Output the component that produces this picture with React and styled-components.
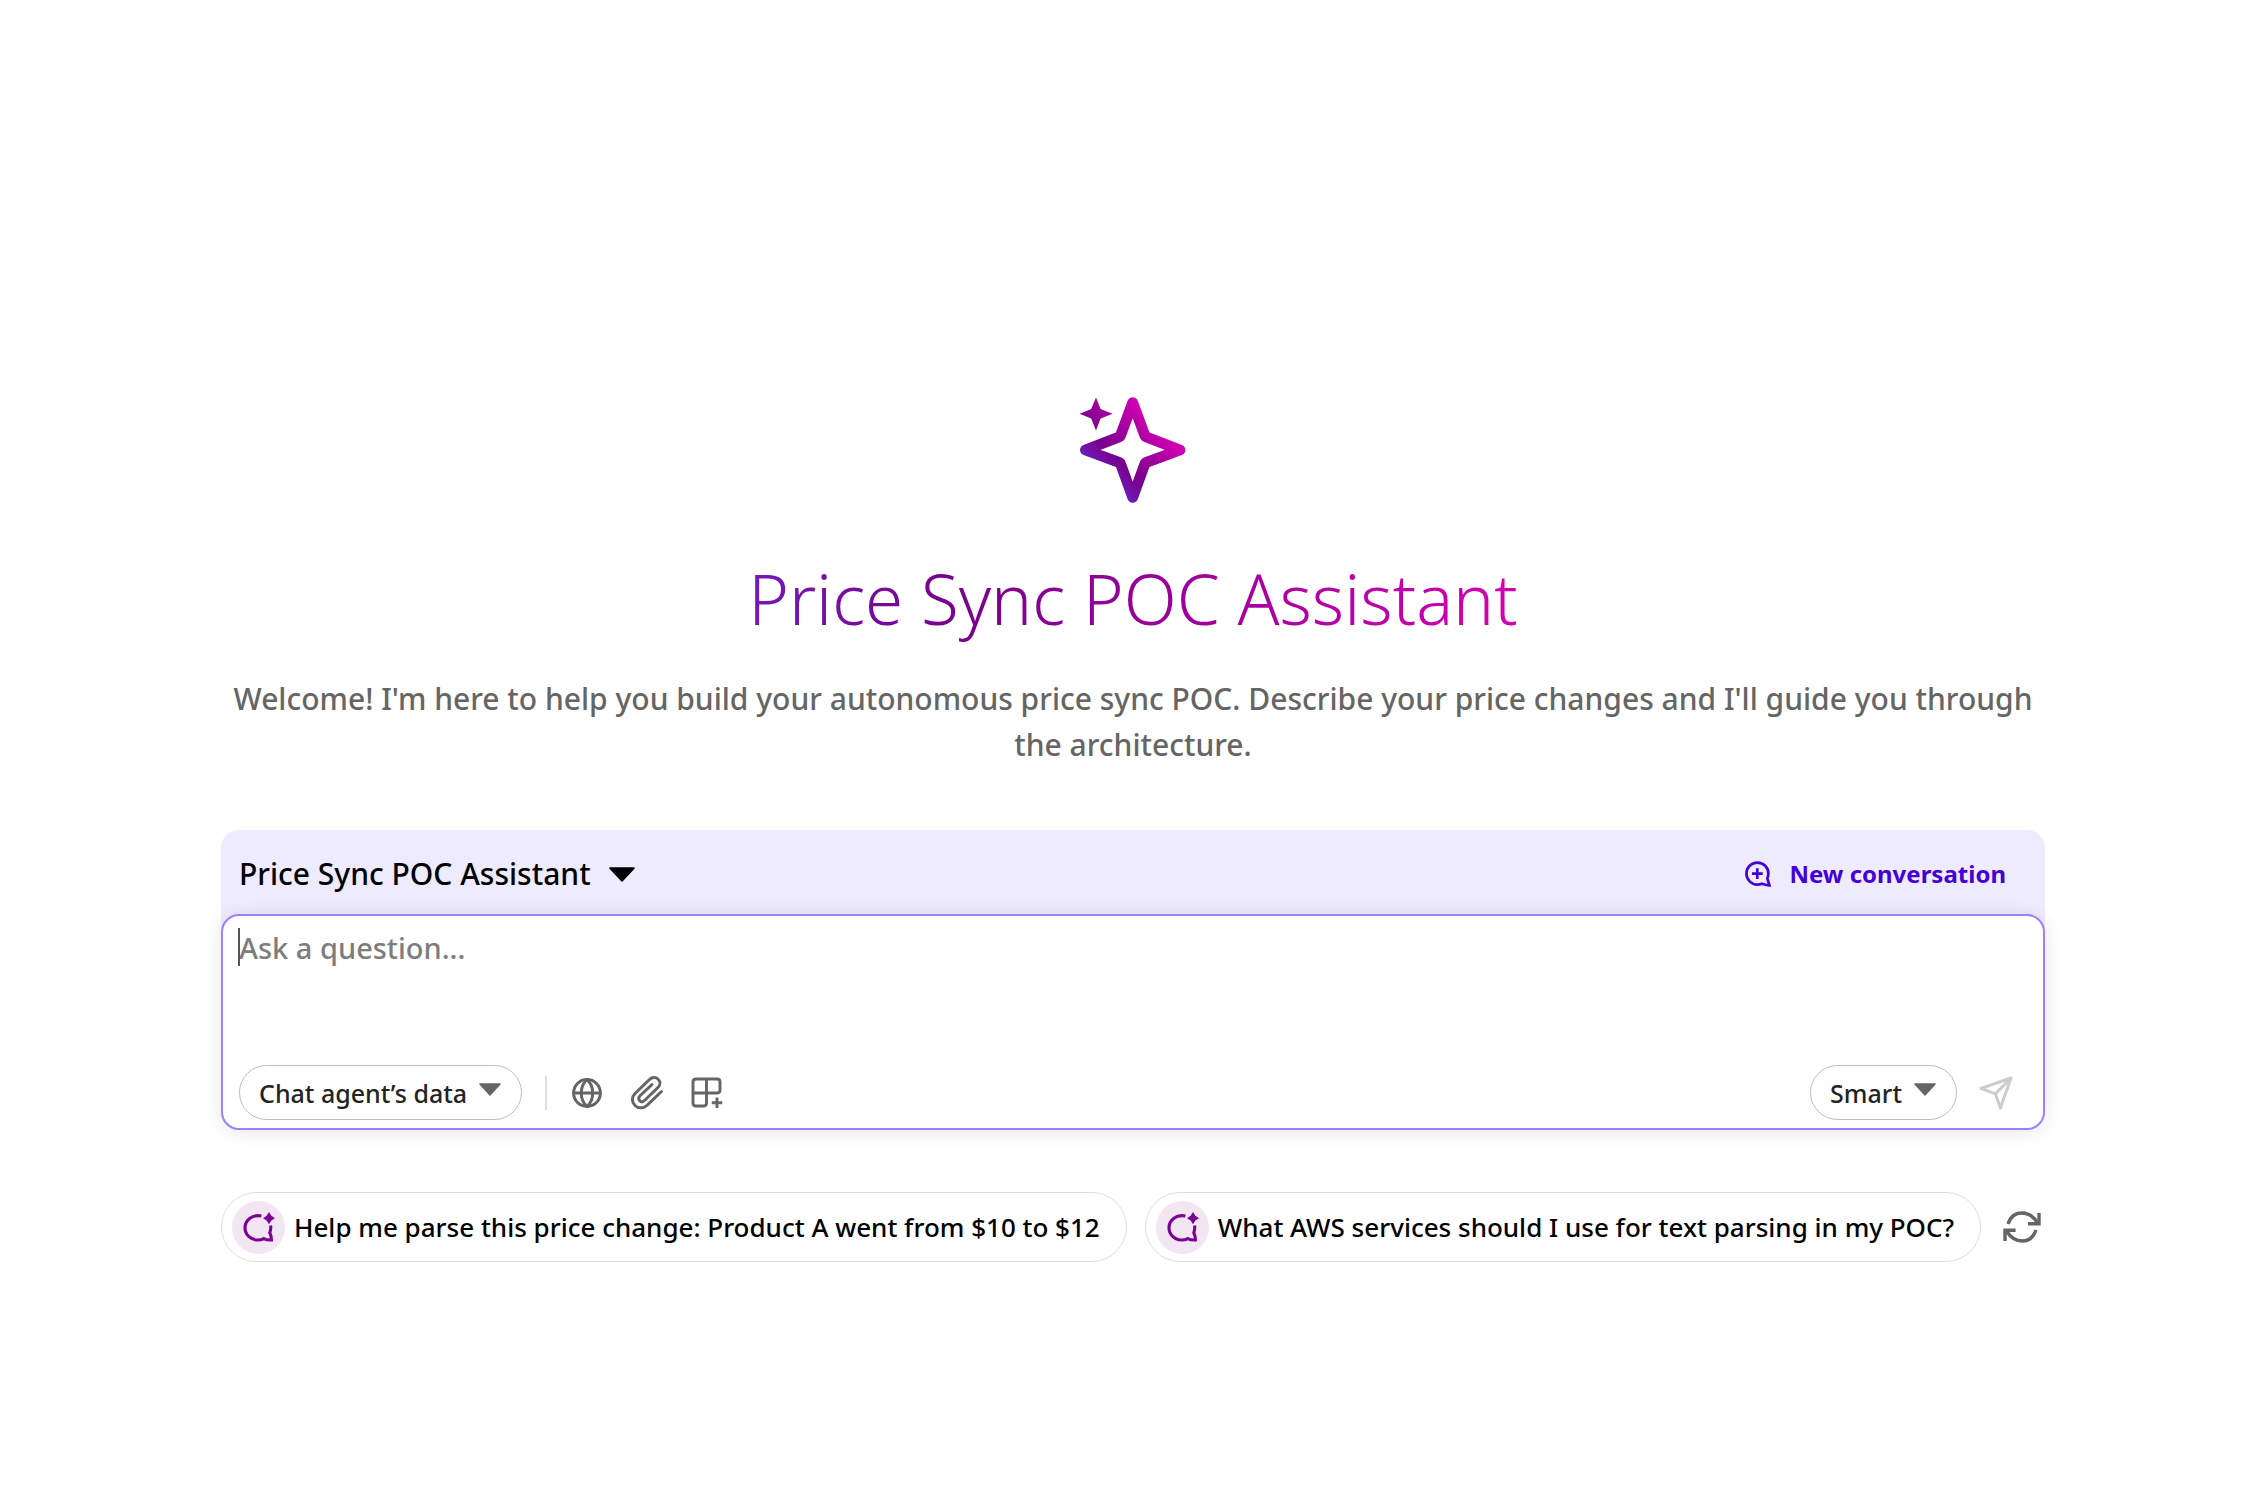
import React, { useState } from 'react';
import styled, { createGlobalStyle } from 'styled-components';

const prompts = [
  'Help me parse this price change: Product A went from $10 to $12',
  'What AWS services should I use for text parsing in my POC?',
];

const SparkleIcon = () => (
  <svg width="106" height="106" viewBox="0 0 106 106" overflow="visible" aria-hidden="true">
    <defs>
      <linearGradient id="spark" gradientUnits="userSpaceOnUse" x1="26" y1="80" x2="79" y2="27">
        <stop offset="0" stopColor="#6f1db8" />
        <stop offset="0.28" stopColor="#78008c" />
        <stop offset="1" stopColor="#d300b2" />
      </linearGradient>
    </defs>
    <path
      d="M52.7 5.6 L40.6 38.4 Q40.2 39.6 39 40 L5.4 53 L39 65.4 Q40.2 65.8 40.6 67 L52.7 100.4 L64.8 67 Q65.2 65.8 66.4 65.4 L100 53 L66.4 40 Q65.2 39.6 64.8 38.4 Z"
      fill="none"
      stroke="url(#spark)"
      strokeWidth="10.8"
      strokeLinejoin="round"
    />
    <path
      d="M16 0.6 L20.6 12 L32.6 16.8 L20.6 21.6 L16 33.4 L11.2 21.6 L-0.4 16.8 L11.2 12 Z"
      fill="url(#spark)"
    />
  </svg>
);

const Triangle = ({ width, height }) => (
  <svg width={width} height={height} viewBox="0 0 24 13" preserveAspectRatio="none" aria-hidden="true">
    <path d="M1 1 H23 L12 12 Z" fill="currentColor" stroke="currentColor" strokeWidth="1.6" strokeLinejoin="round" />
  </svg>
);

const NewChatIcon = () => (
  <svg width="26" height="26" viewBox="0 0 26 26" fill="none" stroke="currentColor" strokeWidth="2.7" aria-hidden="true">
    <path d="M23.4 12.6 A11 11 0 1 0 12.4 23.6 C14.3 23.6 15.6 23.2 17 22.7 C19.2 23.5 21.8 24 24.4 24.3 L22.3 17.4 C23 16 23.4 14.4 23.4 12.6 Z" />
    <path d="M12.3 7.2 V18 M6.9 12.6 H17.7" />
  </svg>
);

const GlobeIcon = () => (
  <svg width="32" height="32" viewBox="0 0 32 32" fill="none" stroke="currentColor" strokeWidth="3" aria-hidden="true">
    <circle cx="16" cy="16" r="13.4" />
    <path d="M2.6 16 H29.4" />
    <path d="M16 2.6 C8.4 9 8.4 23 16 29.4 C23.6 23 23.6 9 16 2.6 Z" strokeLinejoin="round" />
  </svg>
);

const ClipIcon = () => (
  <svg width="34" height="35" viewBox="0 0 34 35" fill="none" stroke="currentColor" strokeWidth="3" strokeLinecap="round" aria-hidden="true">
    <path d="M31.5 16.5 L17 30.3 C13 33.8 8 33.5 5 30.5 C1.5 27 1.5 22 5 18.5 L19.5 4.5 C22 2 26 2 28.2 4.2 C30.5 6.5 30.5 10 28.2 12.3 L14.5 25.5 C13 27 11 27 9.7 25.7 C8.3 24.3 8.5 22.3 9.8 21 L22 9.5" />
  </svg>
);

const AppsIcon = () => (
  <svg width="32" height="32" viewBox="0 0 32 32" fill="none" stroke="currentColor" strokeWidth="2.9" aria-hidden="true">
    <path d="M5 2 H26 Q29 2 29 5 V13 Q29 16 26 16 H2 M15.5 2 V26 Q15.5 29 12.5 29 H5 Q2 29 2 26 V5 Q2 2 5 2" />
    <path d="M26 20.5 V31 M20.8 25.8 H31.2" />
  </svg>
);

const SendIcon = () => (
  <svg width="34" height="34" viewBox="0 0 34 34" fill="none" stroke="currentColor" strokeWidth="3" strokeLinejoin="round" aria-hidden="true">
    <path d="M32 2 L2 12.4 L16.4 17.8 L21.4 32 Z M32 2 L16.4 17.8" />
  </svg>
);

const PromptIcon = () => (
  <svg width="31" height="31" viewBox="0 0 31 31" fill="none" stroke="currentColor" strokeWidth="3.1" overflow="visible" aria-hidden="true">
    <path d="M18.4 4 C9.6 2 2 8 2 15.8 C2 22.6 7.6 28 14.4 28 C17 28 19 27.6 20.8 26.6 C23.2 27.8 26 28.2 28.4 28 C28.4 25.6 28 23.2 26.8 20.8 C27.6 18.6 28 16 27.6 13.4" />
    <path d="M26 0 L28.4 3.8 L32 6.2 L28.4 8.6 L26 12.2 L23.6 8.6 L20 6.2 L23.6 3.8 Z" fill="currentColor" stroke="none" />
  </svg>
);

const RefreshIcon = () => (
  <svg width="38" height="32" viewBox="0 0 38 32" fill="none" stroke="currentColor" strokeWidth="3.4" aria-hidden="true">
    <path d="M5 13 C7.4 5.8 12.6 2 18.8 2 C25.4 2 30.8 5.8 34.4 12" />
    <path d="M36 2 V12.8 H25" />
    <path d="M33 19 C30.6 26.2 25.4 30 19.2 30 C12.4 30 7.4 26.2 3.4 20" />
    <path d="M2 30 V19.2 H12.6" />
  </svg>
);

const App = () => {
  const [question, setQuestion] = useState('');

  const questionChangeHandler = e => {
    setQuestion(e.target.value);
  };

  const submitHandler = e => {
    e.preventDefault();
    setQuestion('');
  };

  return (
    <Page>
      <GlobalStyle />
      <Hero>
        <SparkleIcon />
        <Title>Price Sync POC Assistant</Title>
        <Welcome>
          Welcome! I'm here to help you build your autonomous price sync POC. Describe your price
          changes and I'll guide you through the architecture.
        </Welcome>
      </Hero>

      <Composer onSubmit={submitHandler}>
        <ComposerHeader>
          <AgentPicker>
            <Select aria-label="Chat agent">
              <option>Price Sync POC Assistant</option>
            </Select>
            <Triangle width={26} height={15} />
          </AgentPicker>
          <NewConversation type="button">
            <NewChatIcon />
            New conversation
          </NewConversation>
        </ComposerHeader>
        <InputPanel>
          <QuestionField>
            {!question && <Caret />}
            <Question
              aria-label="Question"
              placeholder="Ask a question..."
              value={question}
              onChange={questionChangeHandler}
            />
          </QuestionField>
          <Toolbar>
            <PillPicker>
              <Select aria-label="Data source">
                <option>Chat agent’s data</option>
              </Select>
              <Triangle width={22} height={13} />
            </PillPicker>
            <Divider />
            <Tools>
              <IconButton type="button" aria-label="Web search">
                <GlobeIcon />
              </IconButton>
              <IconButton type="button" aria-label="Attach a file">
                <ClipIcon />
              </IconButton>
              <IconButton type="button" aria-label="Add apps">
                <AppsIcon />
              </IconButton>
            </Tools>
            <SendGroup>
              <PillPicker>
                <Select aria-label="Mode">
                  <option>Smart</option>
                </Select>
                <Triangle width={22} height={13} />
              </PillPicker>
              <IconButton type="submit" aria-label="Send" $muted>
                <SendIcon />
              </IconButton>
            </SendGroup>
          </Toolbar>
        </InputPanel>
      </Composer>

      <Suggestions>
        {prompts.map(prompt => (
          <Suggestion key={prompt} type="button" onClick={() => setQuestion(prompt)}>
            <Badge>
              <PromptIcon />
            </Badge>
            {prompt}
          </Suggestion>
        ))}
        <IconButton type="button" aria-label="Refresh suggestions">
          <RefreshIcon />
        </IconButton>
      </Suggestions>
    </Page>
  );
};

const GlobalStyle = createGlobalStyle`
  * {
    box-sizing: border-box;
  }

  body {
    margin: 0;
    background: #fff;
    color: #000;
    font-family: 'Noto Sans', 'Open Sans', sans-serif;
  }

  button,
  select,
  textarea {
    font: inherit;
    color: inherit;
  }
`;

const Page = styled.main`
  max-width: 1872px;
  margin: 0 auto;
  padding: 397px 24px 48px;
`;

const Hero = styled.section`
  display: flex;
  flex-direction: column;
  align-items: center;
  text-align: center;
`;

const Title = styled.h1`
  margin: 48px 0 0;
  font-size: 69px;
  font-weight: 300;
  line-height: 94px;
  color: transparent;
  background: linear-gradient(90deg, #7519b8, #78008c 27%, #d300b2);
  background-clip: text;
`;

const Welcome = styled.p`
  margin: 31px 0 0;
  font-size: 30px;
  font-weight: 500;
  line-height: 46px;
  color: #656565;
`;

const Composer = styled.form`
  margin-top: 62px;
`;

const ComposerHeader = styled.div`
  display: flex;
  align-items: center;
  justify-content: space-between;
  padding: 24px 39px 38px 18px;
  border-radius: 18px 18px 0 0;
  background: #efebff;
`;

const AgentPicker = styled.div`
  display: flex;
  align-items: center;
  gap: 18px;
  font-size: 30px;
  font-weight: 500;
  line-height: 40px;
`;

const Select = styled.select`
  appearance: none;
  field-sizing: content;
  padding: 0;
  border: 0;
  outline: 0;
  background: transparent;
  cursor: pointer;
`;

const NewConversation = styled.button`
  display: flex;
  align-items: center;
  gap: 18px;
  padding: 0;
  border: 0;
  background: transparent;
  color: #4400d4;
  font-size: 24px;
  font-weight: 700;
  line-height: 32px;
  cursor: pointer;
`;

const InputPanel = styled.div`
  position: relative;
  margin-top: -18px;
  padding: 12px 30px 8px 16px;
  border: 2px solid #9b80ff;
  border-radius: 18px;
  background: #fff;
  box-shadow: 0 2px 18px rgba(0, 0, 0, 0.1);
`;

const QuestionField = styled.div`
  position: relative;
`;

const Question = styled.textarea`
  display: block;
  width: 100%;
  height: 137px;
  padding: 0;
  border: 0;
  outline: 0;
  resize: none;
  background: transparent;
  font-size: 29px;
  font-weight: 500;
  line-height: 40px;

  &::placeholder {
    color: #7d7d7d;
    opacity: 1;
  }
`;

const Caret = styled.span`
  position: absolute;
  top: 0;
  left: -1px;
  width: 2px;
  height: 38px;
  background: #555;
`;

const Toolbar = styled.div`
  display: flex;
  align-items: center;
`;

const PillPicker = styled.div`
  display: flex;
  align-items: center;
  gap: 12px;
  height: 55px;
  padding: 0 20px 0 19px;
  border: 1px solid #bdbdbd;
  border-radius: 28px;
  color: #232323;
  font-size: 25px;
  font-weight: 500;
  line-height: 36px;

  svg {
    color: #656565;
    margin-bottom: 7px;
  }
`;

const Divider = styled.span`
  width: 2px;
  height: 34px;
  margin: 0 24px 0 23px;
  background: #dedede;
`;

const Tools = styled.div`
  display: flex;
  align-items: center;
  gap: 27px;
`;

const SendGroup = styled.div`
  display: flex;
  align-items: center;
  gap: 22px;
  margin-left: auto;
`;

const IconButton = styled.button`
  display: flex;
  flex: none;
  padding: 0;
  border: 0;
  background: transparent;
  color: ${({ $muted }) => ($muted ? '#cccccc' : '#656565')};
  cursor: pointer;
`;

const Suggestions = styled.div`
  display: flex;
  align-items: center;
  gap: 18px;
  margin-top: 62px;
  padding-right: 6px;

  > :last-child {
    margin-left: 4px;
  }
`;

const Suggestion = styled.button`
  display: flex;
  flex: 1 1 auto;
  align-items: center;
  gap: 9px;
  height: 70px;
  padding: 0 26px 0 10px;
  border: 1px solid #dedede;
  border-radius: 35px;
  background: #fff;
  font-size: 26px;
  font-weight: 500;
  line-height: 36px;
  white-space: nowrap;
  cursor: pointer;
`;

const Badge = styled.span`
  display: flex;
  flex: none;
  align-items: center;
  justify-content: center;
  width: 53px;
  height: 53px;
  border-radius: 50%;
  background: #f2e6f3;
  color: #7d0096;
`;

export default App;
